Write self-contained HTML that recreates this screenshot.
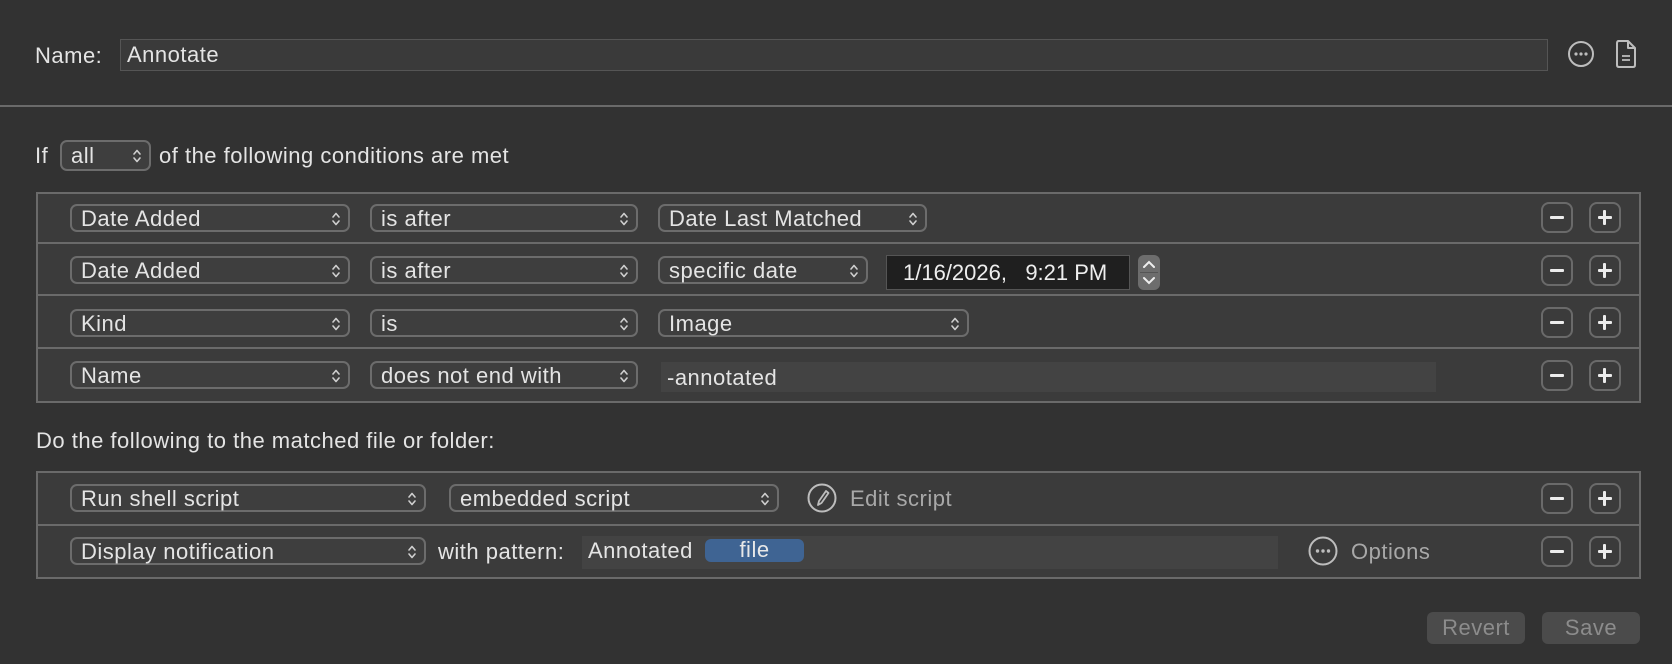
<!DOCTYPE html>
<html><head><meta charset="utf-8"><style>
*{box-sizing:border-box;margin:0;padding:0}
body{width:1672px;height:664px;background:#323232;font-family:"Liberation Sans",Arial,sans-serif;font-size:22px;letter-spacing:0.5px;color:#e4e4e4;position:relative;overflow:hidden}
.a{position:absolute}
.t{position:absolute;line-height:26px;white-space:nowrap}
.pop{position:absolute;height:28px;border:2px solid #6c6c6c;border-radius:7px;background:#3e3e3e;padding-left:9px;line-height:25px;white-space:nowrap}
.pop svg{position:absolute;right:7px;top:5px}
.box{position:absolute;left:36px;width:1605px;border:2px solid #6a6a6a;background:#3b3b3b}
.div{position:absolute;left:36px;width:1605px;height:2px;background:#6a6a6a}
.btn{position:absolute;width:32px;height:31px;border:2px solid #6a6a6a;border-radius:8px}
.btn i{position:absolute;left:7px;top:12px;width:14px;height:3px;background:#ececec;border-radius:1px}
.btn b{position:absolute;left:12px;top:6px;width:3px;height:15px;background:#ececec;border-radius:1px}
.fld{position:absolute;background:#434343;border:1px solid #555;line-height:30px;padding-left:6px;white-space:nowrap}
.pb{position:absolute;top:612px;width:98px;height:32px;background:#4b4b4b;border-radius:6px;color:#8c8c8c;text-align:center;line-height:32px}
</style></head><body>
<svg width="0" height="0" style="position:absolute"><defs><symbol id="ch" viewBox="0 0 10 16"><path d="M2 6 L5 2.5 L8 6 M2 10 L5 13.5 L8 10" fill="none" stroke="#cfcfcf" stroke-width="1.6" stroke-linecap="round" stroke-linejoin="round"/></symbol></defs></svg>

<div class="t" style="left:35px;top:43px">Name:</div>
<div class="fld" style="left:120px;top:39px;width:1428px;height:32px;background:#3a3a3a;border-color:#555;color:#e4e4e4">Annotate</div>
<svg class="a" style="left:1566px;top:39px" width="30" height="30" viewBox="0 0 30 30"><circle cx="15" cy="15" r="12" fill="none" stroke="#bdbdbd" stroke-width="2"/><circle cx="10" cy="15" r="1.6" fill="#bdbdbd"/><circle cx="15" cy="15" r="1.6" fill="#bdbdbd"/><circle cx="20" cy="15" r="1.6" fill="#bdbdbd"/></svg>
<svg class="a" style="left:1614px;top:38px" width="24" height="32" viewBox="0 0 24 32"><path d="M4 3 H14 L21 10 V27 Q21 29 19 29 H5 Q3 29 3 27 V5 Q3 3 5 3 Z M14 3 V10 H21" fill="none" stroke="#bdbdbd" stroke-width="2" stroke-linejoin="round"/><path d="M8 18 H16 M8 22 H16" stroke="#bdbdbd" stroke-width="1.8"/></svg>
<div class="a" style="left:0;top:105px;width:1672px;height:2px;background:#6a6a6a"></div>

<div class="t" style="left:35px;top:143px">If</div>
<div class="pop" style="left:60px;top:140px;width:91px;height:31px;line-height:27px">all<svg width="10" height="16" style="top:6px"><use href="#ch"/></svg></div>
<div class="t" style="left:159px;top:143px">of the following conditions are met</div>

<div class="box" style="top:192px;height:211px"></div>
<div class="div" style="top:242px"></div><div class="div" style="top:294px"></div><div class="div" style="top:347px"></div>

<div class="pop" style="left:70px;top:204px;width:280px">Date Added<svg width="10" height="16"><use href="#ch"/></svg></div>
<div class="pop" style="left:370px;top:204px;width:268px">is after<svg width="10" height="16"><use href="#ch"/></svg></div>
<div class="pop" style="left:658px;top:204px;width:269px">Date Last Matched<svg width="10" height="16"><use href="#ch"/></svg></div>

<div class="pop" style="left:70px;top:256px;width:280px">Date Added<svg width="10" height="16"><use href="#ch"/></svg></div>
<div class="pop" style="left:370px;top:256px;width:268px">is after<svg width="10" height="16"><use href="#ch"/></svg></div>
<div class="pop" style="left:658px;top:256px;width:210px">specific date<svg width="10" height="16"><use href="#ch"/></svg></div>
<div class="a" style="left:886px;top:255px;width:244px;height:35px;background:#1f1f1f;border:1px solid #555;line-height:33px;padding-left:16px;white-space:nowrap;color:#eee;letter-spacing:0">1/16/2026, &nbsp;&nbsp;9:21 PM</div>
<svg class="a" style="left:1138px;top:255px" width="22" height="35" viewBox="0 0 22 35"><rect x="0" y="0" width="22" height="35" rx="6" fill="#6d6d6d"/><line x1="2" y1="17.5" x2="20" y2="17.5" stroke="#555" stroke-width="1"/><path d="M6 12 L11 7 L16 12 M6 23 L11 28 L16 23" fill="none" stroke="#eee" stroke-width="2" stroke-linecap="round"/></svg>

<div class="pop" style="left:70px;top:309px;width:280px">Kind<svg width="10" height="16"><use href="#ch"/></svg></div>
<div class="pop" style="left:370px;top:309px;width:268px">is<svg width="10" height="16"><use href="#ch"/></svg></div>
<div class="pop" style="left:658px;top:309px;width:311px">Image<svg width="10" height="16"><use href="#ch"/></svg></div>

<div class="pop" style="left:70px;top:361px;width:280px">Name<svg width="10" height="16"><use href="#ch"/></svg></div>
<div class="pop" style="left:370px;top:361px;width:268px">does not end with<svg width="10" height="16"><use href="#ch"/></svg></div>
<div class="fld" style="left:661px;top:362px;width:775px;height:30px;border:none;line-height:32px">-annotated</div>

<div class="btn" style="left:1541px;top:202px"><i></i></div><div class="btn" style="left:1589px;top:202px"><i></i><b></b></div>
<div class="btn" style="left:1541px;top:255px"><i></i></div><div class="btn" style="left:1589px;top:255px"><i></i><b></b></div>
<div class="btn" style="left:1541px;top:307px"><i></i></div><div class="btn" style="left:1589px;top:307px"><i></i><b></b></div>
<div class="btn" style="left:1541px;top:360px"><i></i></div><div class="btn" style="left:1589px;top:360px"><i></i><b></b></div>

<div class="t" style="left:36px;top:428px">Do the following to the matched file or folder:</div>

<div class="box" style="top:471px;height:108px"></div>
<div class="div" style="top:524px"></div>
<div class="pop" style="left:70px;top:484px;width:356px">Run shell script<svg width="10" height="16"><use href="#ch"/></svg></div>
<div class="pop" style="left:449px;top:484px;width:330px">embedded script<svg width="10" height="16"><use href="#ch"/></svg></div>
<svg class="a" style="left:806px;top:482px" width="32" height="32" viewBox="0 0 32 32"><circle cx="16" cy="16" r="13.5" fill="none" stroke="#bdbdbd" stroke-width="2"/><path d="M12 23 L13 19 L20 9 L22.5 11 L15.5 21 Z" fill="none" stroke="#bdbdbd" stroke-width="1.8" stroke-linejoin="round"/></svg>
<div class="t" style="left:850px;top:486px;color:#a8a8a8">Edit script</div>

<div class="pop" style="left:70px;top:537px;width:356px">Display notification<svg width="10" height="16"><use href="#ch"/></svg></div>
<div class="t" style="left:438px;top:539px">with pattern:</div>
<div class="fld" style="left:582px;top:536px;width:696px;height:33px;border:none;line-height:30px">Annotated</div>
<div class="a" style="left:705px;top:539px;width:99px;height:23px;background:#3f6493;border-radius:6px;text-align:center;line-height:22px;color:#e8e8e8">file</div>
<svg class="a" style="left:1307px;top:535px" width="32" height="32" viewBox="0 0 32 32"><circle cx="16" cy="16" r="13.5" fill="none" stroke="#bdbdbd" stroke-width="2"/><circle cx="10.5" cy="16" r="1.7" fill="#bdbdbd"/><circle cx="16" cy="16" r="1.7" fill="#bdbdbd"/><circle cx="21.5" cy="16" r="1.7" fill="#bdbdbd"/></svg>
<div class="t" style="left:1351px;top:539px;color:#a8a8a8">Options</div>

<div class="btn" style="left:1541px;top:483px"><i></i></div><div class="btn" style="left:1589px;top:483px"><i></i><b></b></div>
<div class="btn" style="left:1541px;top:536px"><i></i></div><div class="btn" style="left:1589px;top:536px"><i></i><b></b></div>

<div class="pb" style="left:1427px">Revert</div>
<div class="pb" style="left:1542px">Save</div>
</body></html>
